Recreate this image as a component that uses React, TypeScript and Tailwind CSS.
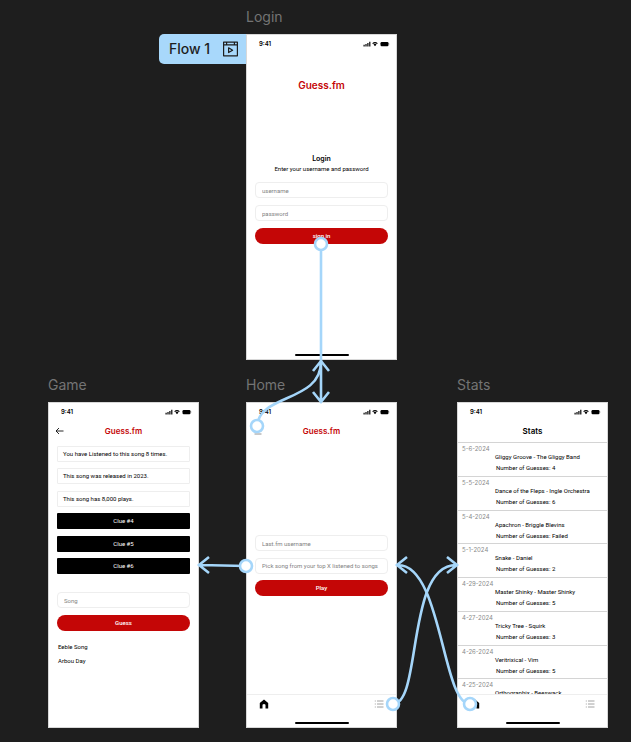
import type { ReactNode } from 'react';

const field =
  'block h-4 w-full rounded-[4px] border border-[#eeeeee] bg-white px-[6px] text-[6px] leading-[8px] text-black placeholder:text-[#828282] outline-none';
const pill =
  'flex h-4 w-full items-center justify-center rounded-full bg-[#c40606] text-[6px] leading-[8px] font-medium text-white';
const inter = "font-['Inter',sans-serif]";

function StatusBar() {
  return (
    <div className="flex h-[18px] shrink-0 items-center justify-between pr-[6px] pl-[12px]">
      <span className={`text-[6px] leading-[8px] font-semibold ${inter}`}>9:41</span>
      <svg className="h-[6px] w-[27px]" viewBox="0 0 27 6" aria-hidden="true">
        <path d="M.5 3.8h1.2v1.7H.5zM2.4 3h1.2v2.5H2.4zM4.3 2h1.2v3.5H4.3zM6.2 .8h1.2v4.7H6.2z" />
        <path d="M9.2 2.2Q12 -.3 14.8 2.2L14 3Q12 1.3 10 3zM10.5 3.4Q12 2.3 13.5 3.4L12 5.2z" />
        <rect x="17.5" y="1" width="8" height="4.2" rx="1.200" />
        <path d="M26 2.3q.8 .8 0 1.6z" opacity=".5" />
      </svg>
    </div>
  );
}

function HomeIndicator() {
  return <div className="mx-auto mb-[3px] h-[2px] w-[54px] shrink-0 rounded-full bg-black" />;
}

function TabBar() {
  return (
    <nav className="flex h-[33px] shrink-0 flex-col border-t border-[#eeeeee] bg-white">
      <div className="flex flex-1 items-start justify-between px-[12px] pt-[4px]">
        <button type="button" aria-label="Home">
          <svg className="h-[10px] w-[10px]" viewBox="0 0 10 10">
            <path d="M.8 4 5 .6 9.200 4V9.400H6.500V5.800Q5 4.300 3.500 5.800V9.400H.8z" />
          </svg>
        </button>
        <button type="button" aria-label="Stats">
          <svg className="h-[10px] w-[10px]" viewBox="0 0 10 10" stroke="#8c8c8c">
            <path d="M3 2h6.500M3 5h6.500M3 8h6.500M.8 2h1M.8 5h1M.8 8h1" strokeWidth=".8" />
          </svg>
        </button>
      </div>
      <HomeIndicator />
    </nav>
  );
}

function Frame({ name, place, children }: { name: string; place: string; children: ReactNode }) {
  return (
    <section className={`absolute w-[151px] ${place}`}>
      <h2 className="h-[27px] text-[14px] leading-[20px] text-[#747474]">{name}</h2>
      <div className="flex h-[326px] flex-col overflow-hidden border border-[#d8d8d8] bg-white font-['Roboto',sans-serif] text-black">
        <StatusBar />
        {children}
      </div>
    </section>
  );
}

function Title({ children, color }: { children: ReactNode; color: string }) {
  return <h1 className={`text-center text-[8px] leading-[10px] font-semibold ${inter} ${color}`}>{children}</h1>;
}

function LoginScreen() {
  return (
    <>
      <h1 className={`mt-[26px] text-center text-[10px] leading-[12px] font-semibold text-[#c40606] ${inter}`}>Guess.fm</h1>
      <div className="mt-[63px] text-center">
        <h3 className={`text-[7px] leading-[10px] font-semibold ${inter}`}>Login</h3>
        <p className="text-[6px] leading-[10px]">Enter your username and password</p>
      </div>
      <form className="mt-[8px] flex flex-1 flex-col gap-[7px] px-[8px]">
        <input className={field} aria-label="username" placeholder="username" />
        <input className={field} aria-label="password" type="password" placeholder="password" />
        <button type="button" className={pill}>sign in</button>
      </form>
      <HomeIndicator />
    </>
  );
}

const clues = ['You have Listened to this song 8 times.', 'This song was released in 2023.', 'This song has 8,000 plays.'];
const hiddenClues = ['Clue #4', 'Clue #5', 'Clue #6'];

function GameScreen() {
  return (
    <>
      <header className="mt-[4px] grid h-[12px] grid-cols-[16px_1fr_16px] items-center">
        <button type="button" aria-label="Back" className="pl-[6px]">
          <svg className="h-[8px] w-[9px]" viewBox="0 0 9 8" fill="none" stroke="#111" strokeWidth=".9">
            <path d="M8.500 4H1M4 1 1 4l3 3" />
          </svg>
        </button>
        <Title color="text-[#c40606]">Guess.fm</Title>
      </header>
      <div className="mx-[8px] mt-[9px] flex h-[128px] flex-col justify-between">
        {clues.map((clue) => (
          <p key={clue} className="flex h-4 items-center rounded-[1px] border border-[#eeeeee] px-[5px] text-[6px] leading-[8px]">
            {clue}
          </p>
        ))}
        {hiddenClues.map((clue) => (
          <button key={clue} type="button" className="h-4 rounded-[1px] bg-black text-[6px] leading-[8px] text-white">
            {clue}
          </button>
        ))}
      </div>
      <form className="mx-[8px] mt-[18px] flex flex-col gap-[7px]">
        <input className={field} aria-label="Song" placeholder="Song" />
        <button type="button" className={pill}>Guess</button>
      </form>
      <ul className="mt-[9px] px-[9px] text-[6px] leading-[14px]">
        <li>Eeble Song</li>
        <li>Arbou Day</li>
      </ul>
    </>
  );
}

function HomeScreen() {
  return (
    <>
      <header className="mt-[4px] grid h-[12px] grid-cols-[16px_1fr_16px] items-center">
        <button type="button" aria-label="Log out" className="pl-[7px]">
          <svg className="h-[8px] w-[8px]" viewBox="0 0 8 8" fill="none" stroke="#777" strokeWidth=".8">
            <path d="M.5 1h7M.5 4h7M.5 7h7" />
          </svg>
        </button>
        <Title color="text-[#c40606]">Guess.fm</Title>
      </header>
      <form className="mt-[98px] mb-auto flex h-[61px] flex-col justify-between px-[8px]">
        <input className={field} aria-label="Last.fm username" placeholder="Last.fm username" />
        <input
          className={field}
          aria-label="Pick song from your top X listened to songs"
          placeholder="Pick song from your top X listened to songs"
        />
        <button type="button" className={pill}>Play</button>
      </form>
      <TabBar />
    </>
  );
}

const games = [
  { date: '5-6-2024', song: 'Gliggy Groove - The Gliggy Band', guesses: '4' },
  { date: '5-5-2024', song: 'Dance of the Fleps - Ingle Orchestra', guesses: '6' },
  { date: '5-4-2024', song: 'Apachron - Briggle Blevins', guesses: 'Failed' },
  { date: '5-1-2024', song: 'Snake - Daniel', guesses: '2' },
  { date: '4-29-2024', song: 'Master Shinky - Master Shinky', guesses: '5' },
  { date: '4-27-2024', song: 'Tricky Tree - Squirk', guesses: '3' },
  { date: '4-26-2024', song: 'Veritrixical - Vim', guesses: '5' },
  { date: '4-25-2024', song: 'Orthographix - Beeswack' },
];

function StatsScreen() {
  return (
    <>
      <header className="mt-[5px]">
        <Title color="text-black">Stats</Title>
      </header>
      <div className="mt-[6px] min-h-0 flex-1 overflow-hidden">
        <ul className="grid h-[270px] grid-rows-8">
          {games.map(({ date, song, guesses }) => (
            <li key={date} className="border-t border-[#d4d4d4] pt-[2px] text-[6px]">
              <p className={`pl-[4px] leading-[8px] text-[#8a8a8a] ${inter}`}>{date}</p>
              <p className="pl-[37px] leading-[8px] whitespace-nowrap">{song}</p>
              {guesses && <p className="mt-[3px] pl-[38px] leading-[8px]">Number of Guesses: {guesses}</p>}
            </li>
          ))}
        </ul>
      </div>
      <TabBar />
    </>
  );
}

function Connectors() {
  return (
    <svg
      className="pointer-events-none absolute top-0 left-0 h-[742px] w-[631px]"
      viewBox="0 0 631 742"
      fill="none"
      stroke="#a5d6fa"
      strokeWidth="2.600"
      aria-hidden="true"
    >
      <path d="M321 244V401M313 392l8 10 8-10" />
      <path d="M257 426C259 394 321 402 321 362M313 371l8-10 8 10" />
      <path d="M246 566 200 565M209 557l-10 8 10 8" />
      <path d="M393 704C422 704 406 565 456 565M447 557l10 8-10 8" />
      <path d="M470 704C442 704 442 565 398 565M407 557l-10 8 10 8" />
      <g fill="#fff">
        <circle cx="321" cy="244" r="6" />
        <circle cx="257" cy="426" r="6" />
        <circle cx="246" cy="566" r="6" />
        <circle cx="393" cy="704" r="6" />
        <circle cx="470" cy="704" r="6" />
      </g>
    </svg>
  );
}

export default function App() {
  return (
    <main className="relative min-h-screen overflow-hidden bg-[#1e1e1e] font-['Inter',sans-serif]">
      <button
        type="button"
        className="absolute top-[34px] left-[159px] flex h-[30px] w-[87px] items-center justify-between rounded-l-[5px] bg-[#a8d8fb] pr-[8px] pl-[10px] text-[14px] leading-[18px] font-medium text-[#1e1e1e]"
      >
        Flow 1
        <svg className="h-[16px] w-[15px]" viewBox="0 0 15 16" fill="none" stroke="#1e1e1e" strokeWidth="1.200">
          <path d="M.6 1.200h13.800v13.600H.6zM.6 3.800h13.800M3.600 1v2.600M11.400 1v2.600M5.600 6.800v4.800l4-2.400z" strokeLinejoin="round" />
        </svg>
      </button>
      <Frame name="Login" place="top-[7px] left-[246px]"><LoginScreen /></Frame>
      <Frame name="Game" place="top-[375px] left-[48px]"><GameScreen /></Frame>
      <Frame name="Home" place="top-[375px] left-[246px]"><HomeScreen /></Frame>
      <Frame name="Stats" place="top-[375px] left-[457px]"><StatsScreen /></Frame>
      <Connectors />
    </main>
  );
}
